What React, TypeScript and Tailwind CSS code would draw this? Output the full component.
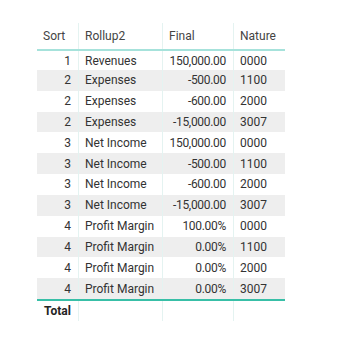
import React from "react";

const rows: [string, string, string, string][] = [
  ["1", "Revenues", "150,000.00", "0000"],
  ["2", "Expenses", "-500.00", "1100"],
  ["2", "Expenses", "-600.00", "2000"],
  ["2", "Expenses", "-15,000.00", "3007"],
  ["3", "Net Income", "150,000.00", "0000"],
  ["3", "Net Income", "-500.00", "1100"],
  ["3", "Net Income", "-600.00", "2000"],
  ["3", "Net Income", "-15,000.00", "3007"],
  ["4", "Profit Margin", "100.00%", "0000"],
  ["4", "Profit Margin", "0.00%", "1100"],
  ["4", "Profit Margin", "0.00%", "2000"],
  ["4", "Profit Margin", "0.00%", "3007"],
];

export default function App() {
  return (
    <div
      className="w-[339px] h-[343px] bg-white pt-[23px] pl-[37px] text-[12px] text-[#333333]"
      style={{ fontFamily: 'Roboto, Lato, sans-serif' }}
    >
      <div className="w-[248px] flex flex-col">
        <div className="flex h-[28px] items-center border-b-2 border-[#a6e2db] text-[#444444]">
          <div className="w-[42px] h-full flex items-center pl-[6px] border-r border-[#e4f3f1]">Sort</div>
          <div className="w-[84px] h-full flex items-center pl-[6px] border-r border-[#e4f3f1]">Rollup2</div>
          <div className="w-[71px] h-full flex items-center pl-[6px] border-r border-[#e4f3f1]">Final</div>
          <div className="w-[51px] h-full flex items-center pl-[6px]">Nature</div>
        </div>
        {rows.map((r, i) => (
          <div
            key={i}
            className={`flex items-center ${i === 0 ? "h-[19px]" : "h-[20.82px]"} ${i % 2 === 1 ? "bg-[#eeeeee]" : "bg-white"}`}
          >
            <div className="w-[42px] h-full flex items-center justify-end pr-[7px] border-r border-[#e4f3f1]">{r[0]}</div>
            <div className="w-[84px] h-full flex items-center pl-[6px] border-r border-[#e4f3f1] whitespace-nowrap">{r[1]}</div>
            <div className="w-[71px] h-full flex items-center justify-end pr-[7px] border-r border-[#e4f3f1] whitespace-nowrap tracking-[-0.3px]">{r[2]}</div>
            <div className="w-[51px] h-full flex items-center pl-[6px]">{r[3]}</div>
          </div>
        ))}
        <div className="flex h-[22px] items-center border-t-2 border-[#38bfa7]">
          <div className="w-[42px] h-full flex items-center pl-[7px] font-bold text-[#252423] border-r border-[#e4f3f1]">Total</div>
          <div className="w-[84px] h-full border-r border-[#e4f3f1]"></div>
          <div className="w-[71px] h-full border-r border-[#e4f3f1]"></div>
          <div className="w-[51px] h-full"></div>
        </div>
      </div>
    </div>
  );
}
